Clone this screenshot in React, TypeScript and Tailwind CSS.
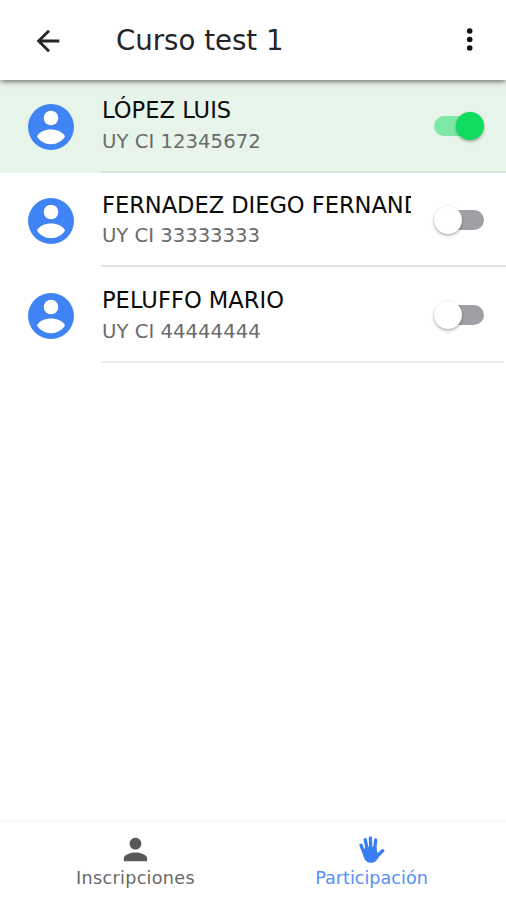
import { useState } from "react";
import { MdArrowBack, MdPerson } from "react-icons/md";

const students = [
    { name: "LÓPEZ LUIS", doc: "UY CI 12345672", present: true, row: "h-[93px]", text: "pt-[13px] gap-px", media: "", line: "border-[#d9e3db]" },
    { name: "FERNADEZ DIEGO FERNAND", doc: "UY CI 33333333", present: false, row: "h-[94px]", text: "pt-[15px] tracking-[-0.05px]", media: "pt-[2px]", line: "border-[#e0e0e0]" },
    { name: "PELUFFO MARIO", doc: "UY CI 44444444", present: false, row: "h-[96px]", text: "pt-[16px] gap-px", media: "pt-[2px]", line: "border-[#ebebeb] mr-[2px]" },
];

function Avatar() {
    return (
        <svg viewBox="0 0 46 46" className="h-[46px] w-[46px] shrink-0">
            <circle cx="23" cy="23" r="23" fill="#3f83f5" />
            <circle cx="23" cy="14" r="7.3" fill="#fff" />
            <path d="M9 32.5C11 28 17 25.6 23 25.6S35 28 37 32.5C34 37.2 29 40.2 23 40.2S12 37.2 9 32.5Z" fill="#fff" />
        </svg>
    );
}

function Hand() {
    return (
        <svg viewBox="0 0 26 28" className="h-7 w-[26px]" fill="currentColor" stroke="currentColor" strokeLinecap="round" strokeLinejoin="round">
            <path d="M2 9.2L5 17M6.2 3.6L8.3 14M11.4 2L11.7 13M16.7 4L15.6 14" strokeWidth="3.3" fill="none" />
            <path d="M23.6 14.8L18.2 20" strokeWidth="3.5" fill="none" />
            <path d="M4.4 15L7.5 11.5L16.5 11.5L17.6 17.2L20 18.5C19 21.5 17.5 24 15.2 25.2C12.5 26.3 9 26 7.2 24C5.4 21.8 4.6 18 4.4 15Z" strokeWidth="1.6" />
        </svg>
    );
}

function Toggle({ checked, onChange }: { checked: boolean; onChange: () => void }) {
    return (
        <button
            role="switch"
            aria-checked={checked}
            onClick={onChange}
            className={`flex h-5 w-[50px] shrink-0 items-center rounded-full ${checked ? "justify-end bg-[#7de9a4]" : "bg-[#9fa0a5]"}`}
        >
            <span
                className={`h-7 w-7 shrink-0 rounded-full shadow-[0_2px_3px_rgba(0,0,0,0.25),0_0_2px_rgba(0,0,0,0.12)] ${checked ? "bg-[#10dc60]" : "bg-white"}`}
            />
        </button>
    );
}

export default function App() {
    const [list, setList] = useState(students);

    const toggle = (index: number) => {
        setList(list.map((s, i) => (i === index ? { ...s, present: !s.present } : s)));
    };

    return (
        <div className="flex h-[900px] w-[506px] flex-col overflow-hidden bg-white font-['DejaVu_Sans',sans-serif]">
            <header className="z-10 flex h-20 shrink-0 items-center bg-white pl-[31px] pr-[19px] shadow-[0_1px_6px_rgba(0,0,0,0.65)]">
                <button aria-label="Volver" className="mt-[2px]">
                    <MdArrowBack className="h-[34px] w-[34px] text-[#252525]" />
                </button>
                <h1 className="ml-[51px] mt-[2px] flex-1 whitespace-nowrap text-[27.6px] leading-[34px] text-[#222428]">Curso test 1</h1>
                <button aria-label="Más opciones">
                    <svg viewBox="0 0 34 34" className="h-[34px] w-[34px]" fill="#111">
                        <circle cx="16.7" cy="8" r="2.8" />
                        <circle cx="16.7" cy="16.5" r="2.8" />
                        <circle cx="16.7" cy="25" r="2.8" />
                    </svg>
                </button>
            </header>

            <main className="flex-1">
                {list.map((s, i) => (
                    <div key={s.doc} className={`flex pl-7 ${s.row} ${s.present ? "bg-[#e7f4e9]" : "bg-white"}`}>
                        <div className={`flex items-center ${s.media}`}>
                            <Avatar />
                        </div>
                        <div className={`ml-[27px] flex min-w-0 flex-1 border-b-2 ${s.line}`}>
                            <div className={`flex w-[310px] shrink-0 flex-col overflow-hidden whitespace-nowrap ${s.text}`}>
                                <h2 className="shrink-0 overflow-hidden pl-px text-[22.6px] leading-[34px] text-[#0c0c0c]">{s.name}</h2>
                                <p className="pl-px text-[19.7px] leading-[28px] text-[#6b6b6b]">{s.doc}</p>
                            </div>
                            <div className={`ml-[23px] flex items-center ${s.media}`}>
                                <Toggle checked={s.present} onChange={() => toggle(i)} />
                            </div>
                        </div>
                    </div>
                ))}
            </main>

            <nav className="flex h-[80px] shrink-0 border-t-2 border-[#f7f7f7] pr-[1px]">
                <button className="flex w-[271px] flex-col items-center pt-[10px] text-[#595959]">
                    <MdPerson className="h-[35px] w-[35px]" />
                    <span className="-mt-px text-[17.6px] leading-[24px] tracking-[0.3px] text-[#686868]">Inscripciones</span>
                </button>
                <button className="flex w-[201px] flex-col items-center pt-[14px] text-[#387ef5]">
                    <Hand />
                    <span className="mt-[2px] text-[17.6px] leading-[24px] text-[#5590f8]">Participación</span>
                </button>
            </nav>
        </div>
    );
}
